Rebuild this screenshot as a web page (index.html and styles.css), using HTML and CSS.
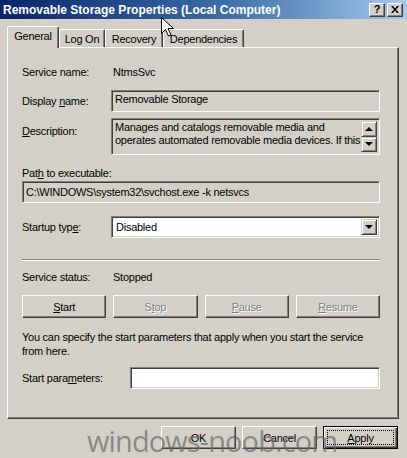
FILE: index.html
```html
<!DOCTYPE html>
<html lang="en">
<head>
    <meta charset="UTF-8">
    <title>Removable Storage Properties (Local Computer)</title>
    <link rel="stylesheet" href="styles.css">
</head>
<body>
    <div class="window">
        <div class="titlebar">
            <span class="title">Removable Storage Properties (Local Computer)</span>
            <div class="title-buttons">
                <span class="tbtn">?</span>
                <span class="tbtn">
                    <svg width="8" height="7" viewBox="0 0 8 7"><path d="M0 0h2l2 2.5 2-2.5h2l-3 3.5 3 3.5h-2l-2-2.5-2 2.5h-2l3-3.5z" fill="#000"/></svg>
                </span>
            </div>
        </div>

        <!-- tabs -->
        <div class="tabs">
            <div class="tab active">General</div>
            <div class="tab tab-logon">Log On</div>
            <div class="tab tab-recovery">Recovery</div>
            <div class="tab tab-deps">Dependencies</div>
        </div>

        <div class="panel">
            <div class="row first">
                <span class="label">Service name:</span>
                <span class="value">NtmsSvc</span>
            </div>
            <div class="row gap7">
                <span class="label">Display <u>n</u>ame:</span>
                <div class="field readonly">Removable Storage</div>
            </div>
            <div class="row desc-row">
                <span class="label desc-label"><u>D</u>escription:</span>
                <div class="field readonly desc">
                    <div class="desc-text">
                        <div>Manages and catalogs removable media and</div>
                        <div>operates automated removable media devices. If this</div>
                    </div>
                    <div class="scrollbar">
                        <span class="sbtn"><i class="arrow-up"></i></span>
                        <span class="sbtn"><i class="arrow-down"></i></span>
                    </div>
                </div>
            </div>
            <div class="path-label">Pat<u>h</u> to executable:</div>
            <div class="field readonly path">C:\WINDOWS\system32\svchost.exe -k netsvcs</div>
            <div class="row gap13">
                <span class="label">Startup typ<u>e</u>:</span>
                <div class="field combo">
                    <span class="combo-text">Disabled</span>
                    <span class="sbtn drop"><i class="arrow-down"></i></span>
                </div>
            </div>
            <div class="separator"></div>
            <div class="row status-row">
                <span class="label">Service status:</span>
                <span class="value">Stopped</span>
            </div>
            <div class="service-buttons">
                <button class="btn"><u>S</u>tart</button>
                <button class="btn disabled">S<u>t</u>op</button>
                <button class="btn disabled"><u>P</u>ause</button>
                <button class="btn disabled"><u>R</u>esume</button>
            </div>
            <p class="hint">You can specify the start parameters that apply when you start the service from here.</p>
            <div class="row params-row">
                <span class="label params-label">Start para<u>m</u>eters:</span>
                <div class="field input"></div>
            </div>
        </div>

        <div class="footer">
            <button class="btn">OK</button>
            <button class="btn">Cancel</button>
            <button class="btn default"><span class="focus"><u>A</u>pply</span></button>
        </div>

        <div class="watermark">windows-noob.com</div>

        <svg class="cursor" width="13" height="21" viewBox="0 0 13 21">
            <path d="M0.5 0.5v16l4-4 3 6.5 2.5-1-3-6.5h5.5z" fill="#fff" stroke="#000"/>
        </svg>
    </div>
</body>
</html>
```

FILE: styles.css
```css
/* base */
* {
    margin: 0;
    padding: 0;
    box-sizing: border-box;
}

body {
    background-color: #d4d0c8;
    font-family: 'Liberation Sans', Arial, sans-serif;
    font-size: 11px;
    letter-spacing: -0.25px;
    color: #000;
}

.window {
    position: relative;
    width: 407px;
    height: 458px;
    overflow: hidden;
}

u {
    text-decoration: underline;
    text-underline-offset: 1px;
}

/* title bar */
.titlebar {
    height: 19px;
    display: flex;
    align-items: center;
    justify-content: space-between;
    padding: 0 4px 0 3px;
    background: linear-gradient(to right, #0a246a 0%, #3a6ea5 55%, #a6caf0 100%);
}

.title {
    color: #fff;
    font-weight: bold;
    font-size: 12px;
    letter-spacing: 0;
}

.title-buttons {
    display: flex;
    gap: 2px;
}

.tbtn {
    width: 16px;
    height: 14px;
    display: flex;
    align-items: center;
    justify-content: center;
    background: #d4d0c8;
    border: 1px solid;
    border-color: #fff #404040 #404040 #fff;
    box-shadow: inset -1px -1px #808080;
    font-weight: bold;
    font-size: 11px;
    line-height: 1;
}

/* tabs */
.tabs {
    display: flex;
    align-items: flex-end;
    height: 20px;
    margin-top: 8px;
    padding-left: 7px;
}

.tab {
    height: 18px;
    padding: 0 4px;
    display: flex;
    align-items: center;
    justify-content: center;
    white-space: nowrap;
    border: 1px solid;
    border-bottom: none;
    border-color: #fff #404040 #404040 #fff;
    box-shadow: inset -1px 0 #808080;
    border-radius: 2px 2px 0 0;
}

.tab-logon {
    width: 46px;
}

.tab-recovery {
    width: 58px;
}

.tab-deps {
    width: 81px;
}

.tab.active {
    position: relative;
    z-index: 1;
    height: 22px;
    width: 52px;
    margin-bottom: -1px;
    padding: 0 0 3px 0;
    background: #d4d0c8;
}

/* main panel */
.panel {
    width: 392px;
    height: 372px;
    margin-left: 7px;
    padding: 13px 18px 0 14px;
    border: 1px solid;
    border-color: #fff #404040 #404040 #fff;
    box-shadow: inset -1px -1px #808080;
}

.row {
    display: flex;
    align-items: center;
    height: 22px;
}

.label {
    width: 89px;
    flex-shrink: 0;
}

.value {
    padding-left: 2px;
}

.gap7 {
    margin-top: 7px;
}

.gap13 {
    margin-top: 13px;
}

.field {
    flex: 1;
    height: 22px;
    border: 1px solid;
    border-color: #808080 #fff #fff #808080;
    box-shadow: inset 1px 1px #404040, inset -1px -1px #d4d0c8;
    padding: 2px 3px;
    white-space: nowrap;
    overflow: hidden;
}

.readonly {
    background: #d4d0c8;
}

.desc-row {
    height: 37px;
    margin-top: 6px;
    align-items: flex-start;
}

.desc-label {
    padding-top: 7px;
}

.field.desc {
    height: 37px;
    display: flex;
    padding: 2px 2px 2px 3px;
    line-height: 13px;
}

.desc-text {
    flex: 1;
    overflow: hidden;
}

.scrollbar {
    width: 16px;
    display: flex;
    flex-direction: column;
}

.sbtn {
    flex: 1;
    display: flex;
    align-items: center;
    justify-content: center;
    background: #d4d0c8;
    border: 1px solid;
    border-color: #d4d0c8 #404040 #404040 #d4d0c8;
    box-shadow: inset 1px 1px #fff, inset -1px -1px #808080;
}

.arrow-up,
.arrow-down {
    width: 0;
    height: 0;
    border-left: 4px solid transparent;
    border-right: 4px solid transparent;
}

.arrow-up {
    border-bottom: 4px solid #000;
}

.arrow-down {
    border-top: 4px solid #000;
}

.path-label {
    height: 13px;
    line-height: 13px;
    margin-top: 12px;
}

.field.path {
    display: block;
    margin-top: 1px;
    line-height: 16px;
    padding-left: 3px;
}

.field.combo {
    display: flex;
    align-items: stretch;
    background: #fff;
    padding: 2px;
}

.combo-text {
    flex: 1;
    padding-left: 2px;
    line-height: 16px;
}

.sbtn.drop {
    flex: 0 0 16px;
}

.separator {
    height: 2px;
    margin-top: 21px;
    border-top: 1px solid #808080;
    border-bottom: 1px solid #fff;
}

.status-row {
    margin-top: 5px;
}

/* buttons */
.btn {
    height: 23px;
    background: #d4d0c8;
    border: 1px solid;
    border-color: #fff #404040 #404040 #fff;
    box-shadow: inset -1px -1px #808080;
    font: inherit;
    letter-spacing: inherit;
    color: #000;
}

.btn.disabled {
    color: #808080;
    text-shadow: 1px 1px #fff;
}

.service-buttons {
    display: grid;
    grid-template-columns: repeat(4, 1fr);
    gap: 7px;
    margin-top: 7px;
}

.hint {
    margin-top: 12px;
    line-height: 14px;
}

.params-row {
    margin-top: 9px;
}

.params-label {
    width: 108px;
}

.field.input {
    background: #fff;
}

/* dialog footer */
.footer {
    display: flex;
    justify-content: flex-end;
    gap: 6px;
    margin-top: 7px;
    padding-right: 9px;
}

.footer .btn {
    width: 75px;
}

.btn.default {
    border: 1px solid #000;
    box-shadow: inset 1px 1px #fff, inset -1px -1px #404040, inset -2px -2px #808080;
    padding: 3px;
}

.focus {
    display: flex;
    align-items: center;
    justify-content: center;
    height: 100%;
    border: 1px dotted #000;
}

/* overlay */
.watermark {
    position: absolute;
    left: 87px;
    top: 421px;
    font-family: 'Open Sans', sans-serif;
    font-size: 29px;
    letter-spacing: -0.9px;
    color: rgba(105, 105, 105, 0.7);
    pointer-events: none;
}

.cursor {
    position: absolute;
    left: 161px;
    top: 17px;
}
```
